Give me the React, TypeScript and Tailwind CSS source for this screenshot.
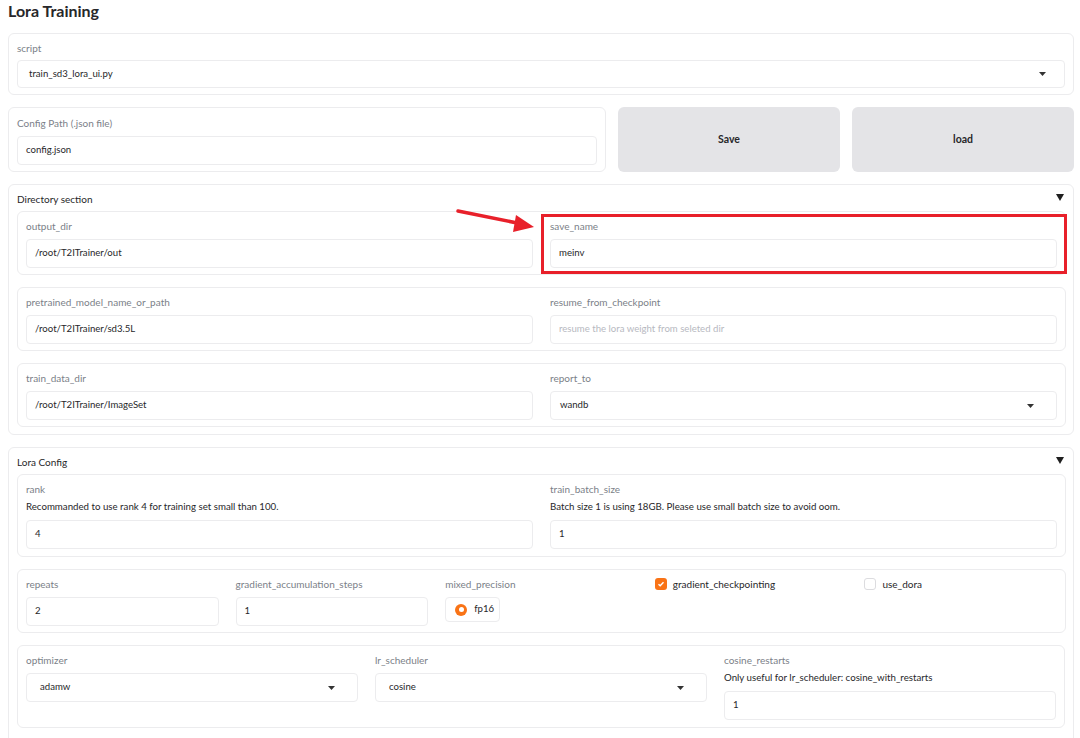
const font = "font-['Lato','Liberation_Sans',sans-serif]"

function Caret() {
  return (
    <svg width="7" height="4" viewBox="0 0 7 4" className="shrink-0">
      <path d="M0 0h7L3.5 4z" fill="#333" />
    </svg>
  )
}

function Label({ children }: { children: React.ReactNode }) {
  return <div className="text-[10px] leading-[14px] text-[#7b7f88] h-[14px]">{children}</div>
}

function Info({ children }: { children: React.ReactNode }) {
  return <div className="text-[9.7px] leading-[14px] text-[#27272a] mt-[3px]">{children}</div>
}

function TextBox({ value, placeholder }: { value?: string; placeholder?: string }) {
  return (
    <div className="h-[29px] mt-[6px] border border-[#ececee] rounded-[4px] flex items-center px-[8px] text-[9.6px] bg-white">
      {value ? (
        <span className="text-[#27272a]">{value}</span>
      ) : (
        <span className="text-[#b7b9bf]">{placeholder}</span>
      )}
    </div>
  )
}

function Select({ value, indent = 13 }: { value: string; indent?: number }) {
  return (
    <div className="h-[29px] mt-[6px] border border-[#ececee] rounded-[4px] flex items-center justify-between pr-[22px] text-[9.6px] bg-white">
      <span className="text-[#27272a]" style={{ paddingLeft: indent }}>{value}</span>
      <Caret />
    </div>
  )
}

function Row({ children, cols, className = 'pb-[6px]' }: { children: React.ReactNode; cols: string; className?: string }) {
  return (
    <div className={`border border-[#ececee] rounded-[6px] bg-white px-[8px] pt-[7px] ${className}`}>
      <div className={`grid ${cols} gap-x-[17px]`}>{children}</div>
    </div>
  )
}

function Accordion({ title, children, className = 'pb-[7px]' }: { title: string; children: React.ReactNode; className?: string }) {
  return (
    <div className={`border border-[#ececee] rounded-[6px] bg-white pl-[8px] pr-[7px] pt-[7px] ${className}`}>
      <div className="flex items-start justify-between h-[14px] mb-[5px]">
        <span className="text-[10px] leading-[14px] text-[#27272a]">{title}</span>
        <svg width="8" height="7" viewBox="0 0 8 7" className="mr-[2px] mt-[2px]">
          <path d="M0 0h8L4 7z" fill="#1f1f1f" />
        </svg>
      </div>
      <div className="flex flex-col gap-[12px]">{children}</div>
    </div>
  )
}

export default function App() {
  return (
    <div className={`relative w-[1080px] h-[738px] overflow-hidden bg-white pl-[8px] pr-[6px] ${font}`}>
      <h1 className="text-[16px] font-bold text-[#27272a] leading-[20px] pt-[1px] h-[33px]">Lora Training</h1>

      <div className="flex flex-col gap-[12px]">
        <div className="border border-[#ececee] rounded-[6px] px-[8px] pt-[7px] pb-[6px]">
          <Label>script</Label>
          <div className="h-[28px] mt-[5px] border border-[#ececee] rounded-[4px] flex items-center justify-between pr-[18px] text-[9.6px]">
            <span className="pl-[11px] text-[#27272a]">train_sd3_lora_ui.py</span>
            <Caret />
          </div>
        </div>

        <div className="flex gap-[12px] h-[65px]">
          <div className="w-[598px] border border-[#ececee] rounded-[6px] px-[8px] pt-[8px]">
            <Label>Config Path (.json file)</Label>
            <TextBox value="config.json" />
          </div>
          <button className="flex-1 bg-[#e4e4e7] rounded-[6px] text-[10.5px] font-bold text-[#27272a]">Save</button>
          <button className="flex-1 bg-[#e4e4e7] rounded-[6px] text-[10.5px] font-bold text-[#27272a]">load</button>
        </div>

        <Accordion title="Directory section">
          <Row cols="grid-cols-2">
            <div>
              <Label>output_dir</Label>
              <TextBox value="/root/T2ITrainer/out" />
            </div>
            <div className="relative">
              <Label>save_name</Label>
              <TextBox value="meinv" />
              <div className="absolute -left-[9px] -right-[10px] -top-[5px] -bottom-[6px] border-[3px] border-[#e8202a]" />
            </div>
          </Row>
          <Row cols="grid-cols-2">
            <div>
              <Label>pretrained_model_name_or_path</Label>
              <TextBox value="/root/T2ITrainer/sd3.5L" />
            </div>
            <div>
              <Label>resume_from_checkpoint</Label>
              <TextBox placeholder="resume the lora weight from seleted dir" />
            </div>
          </Row>
          <Row cols="grid-cols-2">
            <div>
              <Label>train_data_dir</Label>
              <TextBox value="/root/T2ITrainer/ImageSet" />
            </div>
            <div>
              <Label>report_to</Label>
              <Select value="wandb" indent={9} />
            </div>
          </Row>
        </Accordion>

        <Accordion title="Lora Config" className="pb-[40px]">
          <Row cols="grid-cols-2" className="pb-[7px]">
            <div>
              <Label>rank</Label>
              <Info>Recommanded to use rank 4 for training set small than 100.</Info>
              <div className="pt-[1px]">
                <TextBox value="4" />
              </div>
            </div>
            <div>
              <Label>train_batch_size</Label>
              <Info>Batch size 1 is using 18GB. Please use small batch size to avoid oom.</Info>
              <div className="pt-[1px]">
                <TextBox value="1" />
              </div>
            </div>
          </Row>
          <Row cols="grid-cols-5">
            <div>
              <Label>repeats</Label>
              <TextBox value="2" />
            </div>
            <div>
              <Label>gradient_accumulation_steps</Label>
              <TextBox value="1" />
            </div>
            <div>
              <Label>mixed_precision</Label>
              <div className="mt-[6px] w-[55px] h-[25px] border border-[#ececee] rounded-[4px] flex items-center gap-[7px] pl-[9px] text-[9.6px] text-[#27272a]">
                <span className="w-[12px] h-[12px] rounded-full bg-[#f97316] flex items-center justify-center">
                  <span className="w-[5px] h-[5px] rounded-full bg-white" />
                </span>
                fp16
              </div>
            </div>
            <div className="flex items-start gap-[6px] h-[49px] pt-[1px]">
              <span className="w-[12px] h-[12px] rounded-[3px] bg-[#f97316] flex items-center justify-center">
                <svg width="8" height="8" viewBox="0 0 8 8">
                  <path d="M1.5 4.2l1.7 1.6L6.5 2.3" stroke="white" strokeWidth="1.4" fill="none" />
                </svg>
              </span>
              <span className="text-[10px] leading-[12px] text-[#27272a]">gradient_checkpointing</span>
            </div>
            <div className="flex items-start gap-[6px] pt-[1px]">
              <span className="w-[12px] h-[12px] rounded-[3px] border border-[#dcdcdf] bg-white" />
              <span className="text-[10px] leading-[12px] text-[#27272a]">use_dora</span>
            </div>
          </Row>
          <Row cols="grid-cols-3" className="mr-[1px] pb-[7px]">
            <div>
              <Label>optimizer</Label>
              <Select value="adamw" />
            </div>
            <div>
              <Label>lr_scheduler</Label>
              <Select value="cosine" />
            </div>
            <div>
              <Label>cosine_restarts</Label>
              <Info>Only useful for lr_scheduler: cosine_with_restarts</Info>
              <div className="pt-[1px]">
                <TextBox value="1" />
              </div>
            </div>
          </Row>
        </Accordion>
      </div>

      <svg className="absolute left-[450px] top-[200px]" width="95" height="40" viewBox="0 0 95 40">
        <path d="M8 11 L72 24" stroke="#e8202a" strokeWidth="3.5" strokeLinecap="round" />
        <path d="M84 27 L66 15 L63 32 z" fill="#e8202a" />
      </svg>
    </div>
  )
}
